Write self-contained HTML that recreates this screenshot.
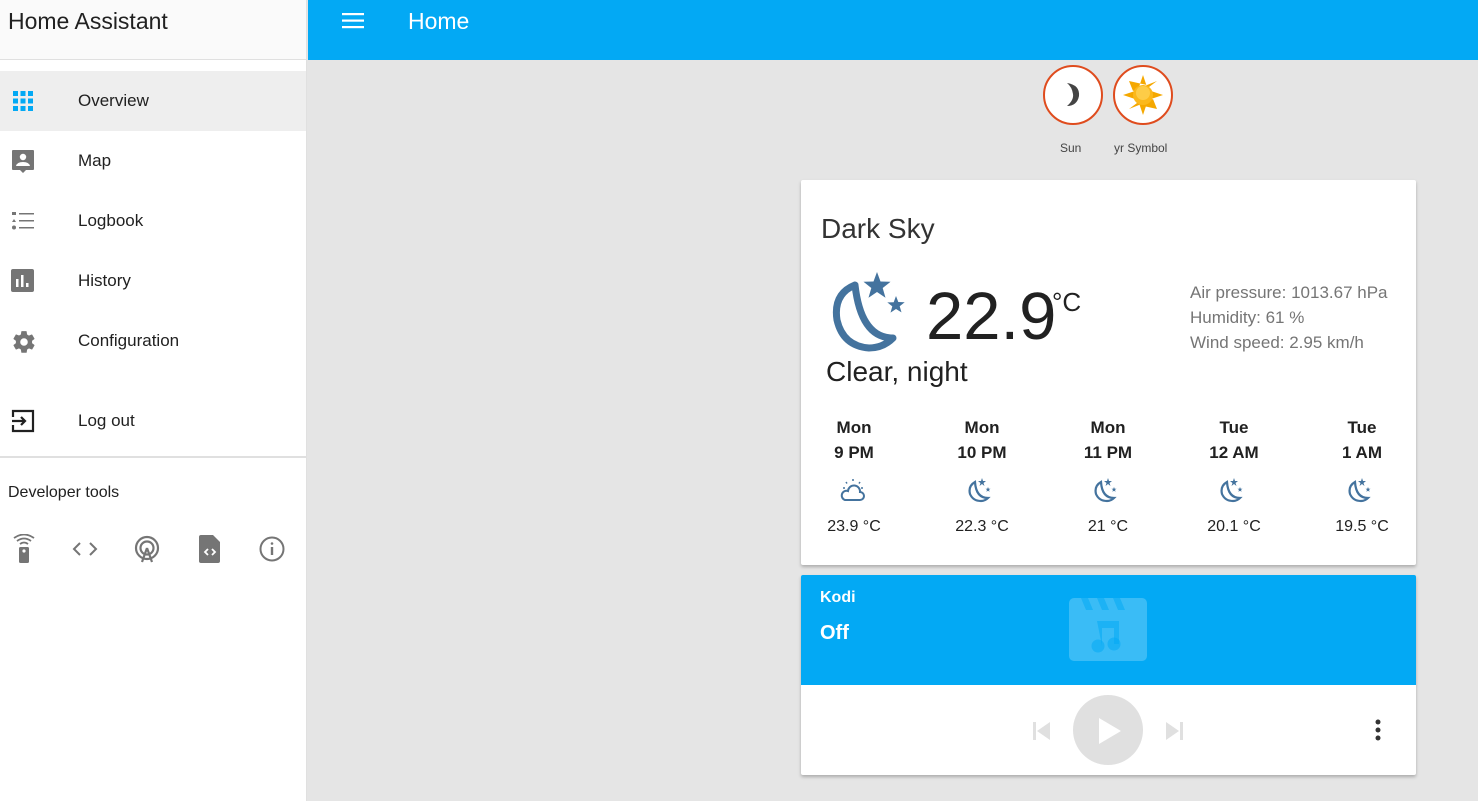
<!DOCTYPE html>
<html><head><meta charset="utf-8"><style>
*{box-sizing:border-box;margin:0;padding:0}
body{width:1478px;height:801px;overflow:hidden;font-family:"Liberation Sans",sans-serif;background:#e5e5e5;position:relative;color:#212121}
.side{position:absolute;left:0;top:0;width:307px;height:801px;background:#fff;border-right:1px solid #e0e0e0}
.sh{height:60px;background:#fafafa;border-bottom:1px solid #e0e0e0;font-size:23px;padding:8px 0 0 8px;color:#212121}
.item{position:absolute;left:0;width:306px;height:60px;font-size:17px;color:#212121}
.item span{position:absolute;left:78px;top:20px}
.item svg{position:absolute;left:11px;top:18px}
.top{position:absolute;left:308px;top:0;width:1170px;height:60px;background:#03a9f4;color:#fff}
.card{position:absolute;background:#fff;border-radius:2px;box-shadow:0 2px 3px rgba(0,0,0,.25)}
.abs{position:absolute}
.fc{position:absolute;width:100px;text-align:center;font-size:17px}
.fc b{display:block;line-height:25px}
</style></head><body>
<div class="side">
<div class="sh">Home Assistant</div>
<div class="item" style="top:71px;background:#eee"><svg width="24" height="24" viewBox="0 0 24 24" fill="#03a9f4"><rect x="2" y="2" width="5" height="5"/><rect x="9.5" y="2" width="5" height="5"/><rect x="17" y="2" width="5" height="5"/><rect x="2" y="9.5" width="5" height="5"/><rect x="9.5" y="9.5" width="5" height="5"/><rect x="17" y="9.5" width="5" height="5"/><rect x="2" y="17" width="5" height="5"/><rect x="9.5" y="17" width="5" height="5"/><rect x="17" y="17" width="5" height="5"/></svg><span>Overview</span></div>
<div class="item" style="top:131px"><svg width="24" height="26" viewBox="0 0 24 26" fill="#757575"><path d="M2 1h20q1 0 1 1v18q0 1-1 1h-7l-3 3-3-3H2q-1 0-1-1V2q0-1 1-1z"/><circle cx="12" cy="8" r="3.2" fill="#fff"/><path d="M5 17q1-4 7-4t7 4z" fill="#fff"/></svg><span>Map</span></div>
<div class="item" style="top:191px"><svg width="24" height="24" viewBox="0 0 24 24" fill="#757575"><rect x="1" y="3" width="4" height="3"/><path d="M3 10l2 3H1z"/><circle cx="3" cy="18.5" r="2"/><rect x="8" y="4" width="15" height="1.5"/><rect x="8" y="11" width="15" height="1.5"/><rect x="8" y="18" width="15" height="1.5"/></svg><span>Logbook</span></div>
<div class="item" style="top:251px"><svg width="24" height="24" viewBox="0 0 24 24" fill="#757575"><rect x="0" y="0" width="23" height="23" rx="2"/><rect x="5" y="10" width="2.5" height="8" fill="#fff"/><rect x="10" y="6" width="2.5" height="12" fill="#fff"/><rect x="15" y="14" width="2.5" height="4" fill="#fff"/></svg><span>History</span></div>
<div class="item" style="top:311px"><svg width="26" height="26" viewBox="0 0 24 24" fill="#757575"><path d="M12 15.5A3.5 3.5 0 1 1 12 8.5a3.5 3.5 0 0 1 0 7zm7.4-2.5c.04-.33.06-.66.06-1s-.02-.67-.06-1l2.1-1.6c.2-.15.25-.42.12-.64l-2-3.46c-.12-.22-.39-.3-.61-.22l-2.490 1c-.52-.4-1.08-.73-1.690-.98l-.38-2.650A.49.49 0 0 0 14 2h-4c-.25 0-.46.18-.49.42l-.38 2.65c-.61.25-1.17.59-1.69.98l-2.49-1c-.23-.09-.49 0-.61.22l-2 3.46c-.13.22-.07.49.12.64L4.57 11c-.04.33-.07.67-.07 1s.03.67.07 1l-2.11 1.6c-.19.15-.24.42-.12.64l2 3.46c.12.22.39.3.61.22l2.49-1c.52.4 1.08.73 1.69.98l.38 2.65c.03.24.24.42.49.42h4c.25 0 .46-.18.49-.42l.38-2.65c.61-.25 1.17-.58 1.69-.98l2.49 1c.23.09.49 0 .61-.22l2-3.46c.12-.22.07-.49-.12-.64L19.4 13z"/></svg><span>Configuration</span></div>
<div class="item" style="top:391px"><svg width="24" height="24" viewBox="0 0 24 24" fill="none" stroke="#212121" stroke-width="2.2"><path d="M2 8V2h20v20H2v-6"/><path d="M1 12h13M10 8l4 4-4 4"/></svg><span>Log out</span></div>
<div class="abs" style="top:456px;left:0;width:306px;border-top:2px solid #e0e0e0"></div>
<div class="abs" style="top:484px;left:8px;font-size:16px">Developer tools</div>
<svg class="abs" style="left:12px;top:534px" width="24" height="30" viewBox="0 0 24 30" fill="#757575"><rect x="7" y="13" width="10" height="16" rx="1.5"/><circle cx="12" cy="17" r="1.6" fill="#fff"/><path d="M8 10q4-3 8 0M5 7q7-5 14 0M2 4q10-7 20 0" stroke="#757575" stroke-width="1.8" fill="none"/></svg>
<svg class="abs" style="left:72px;top:537px" width="26" height="24" viewBox="0 0 26 24" fill="none" stroke="#757575" stroke-width="2"><path d="M8 6l-6 6 6 6M18 6l6 6-6 6"/></svg>
<svg class="abs" style="left:134px;top:535px" width="26" height="28" viewBox="0 0 26 28" fill="none" stroke="#757575" stroke-width="2.2"><circle cx="13" cy="13" r="11"/><circle cx="13" cy="13" r="6.5"/><path d="M13 13l-5 14M13 13l5 14"/></svg>
<svg class="abs" style="left:199px;top:535px" width="22" height="28" viewBox="0 0 22 28" fill="#757575"><path d="M2 0h12l7 7v19q0 2-2 2H2q-2 0-2-2V2q0-2 2-2z"/><path d="M9 14l-3 3 3 3M13 14l3 3-3 3" stroke="#fff" stroke-width="1.8" fill="none"/></svg>
<svg class="abs" style="left:259px;top:536px" width="26" height="26" viewBox="0 0 26 26" fill="none" stroke="#757575" stroke-width="2"><circle cx="13" cy="13" r="11.5"/><path d="M13 11v8" stroke-width="2.4"/><circle cx="13" cy="7.5" r="1.3" fill="#757575" stroke="none"/></svg>
</div>
<div class="top">
<svg class="abs" style="left:34px;top:12px" width="22" height="18" viewBox="0 0 22 18" fill="#fff"><rect y="1" width="22" height="2.2"/><rect y="7.5" width="22" height="2.2"/><rect y="14" width="22" height="2.2"/></svg>
<div class="abs" style="left:100px;top:8px;font-size:23px">Home</div>
</div>
<div class="abs" style="left:1043px;top:65px;width:60px;height:60px;border-radius:50%;border:2px solid #df4c1e;background:#fff"></div>
<svg class="abs" style="left:1062px;top:82px" width="22" height="26" viewBox="0 0 22 26"><path d="M5 1Q18 3 17 14 15 24 5 24 12 18 11 12 10 5 5 1z" fill="#444"/></svg>
<div class="abs" style="left:1113px;top:65px;width:60px;height:60px;border-radius:50%;border:2px solid #df4c1e;background:#fff"></div>
<svg class="abs" style="left:1121px;top:73px" width="44" height="44" viewBox="-22 -22 44 44"><g fill="#f5a800"><path d="M0-20L4-8-4-8zM0 20L4 8-4 8zM-20 0L-8 4-8-4zM20 0L8 4 8-4zM14-14L4-10-10 4zM-14 14L-4 10 10-4zM-14-14L-10 -4 4-10zM14 14L10 4-4 10z"/></g><circle r="10" fill="#fbb81c"/><circle r="7" cy="-2" fill="#fdd45a" opacity=".7"/></svg>
<div class="abs" style="left:1060px;top:141px;font-size:12px;color:#444">Sun</div>
<div class="abs" style="left:1114px;top:141px;font-size:12px;color:#444">yr Symbol</div>

<div class="card" style="left:801px;top:180px;width:615px;height:385px">
<div class="abs" style="left:20px;top:33px;font-size:28px;color:#333">Dark Sky</div>
<svg class="abs" style="left:30px;top:92px" width="80" height="82" viewBox="0 0 80 82"><path d="M24 13Q2 22 6 48q6 26 32 28 14 0 24-10Q30 66 24 13z" fill="none" stroke="#44739e" stroke-width="7" stroke-linejoin="round"/><path d="M46 0l3.5 9.5 10 .3-7.8 6.2 2.8 9.7L46 20l-8.5 5.7 2.8-9.7-7.8-6.2 10-.3z" fill="#44739e"/><path d="M65 24l2.3 6 6.4.2-5 4 1.8 6.2L65 37l-5.5 3.6 1.8-6.2-5-4 6.4-.2z" fill="#44739e"/></svg>
<div class="abs" style="left:125px;top:98px;font-size:67px;color:#212121">22.9</div>
<div class="abs" style="left:251px;top:107px;font-size:26px">°C</div>
<div class="abs" style="left:25px;top:176px;font-size:28px">Clear, night</div>
<div class="abs" style="left:389px;top:100px;font-size:17px;color:#757575;line-height:25px">Air pressure: 1013.67 hPa<br>Humidity: 61 %<br>Wind speed: 2.95 km/h</div>
<div class="fc" style="left:3px;top:235px"><b>Mon</b><b>9 PM</b></div>
<div class="fc" style="left:131px;top:235px"><b>Mon</b><b>10 PM</b></div>
<div class="fc" style="left:257px;top:235px"><b>Mon</b><b>11 PM</b></div>
<div class="fc" style="left:383px;top:235px"><b>Tue</b><b>12 AM</b></div>
<div class="fc" style="left:511px;top:235px"><b>Tue</b><b>1 AM</b></div>
<svg class="abs" style="left:39px;top:298px" width="26" height="26" viewBox="0 0 26 26" fill="none" stroke="#44739e" stroke-width="2"><path d="M5 22h15a4 4 0 0 0 0-8 6 6 0 0 0-12-1 4.5 4.5 0 0 0-3 9z"/><path d="M13 1v2M6 4l1 1.5M20 4l-1 1.5M3 10h2M21 10h2" stroke-width="1.5"/></svg>
<svg class="abs" style="left:166px;top:297px" width="26" height="26" viewBox="0 0 26 26"><path d="M8 5Q1 9 3 17q3 7 11 7 4 0 7-3Q9 21 8 5z" fill="none" stroke="#44739e" stroke-width="2.2"/><path d="M15 1l1 3h3l-2.5 2 1 3-2.5-2-2.5 2 1-3-2.5-2h3z M21 10l.7 1.8h1.8l-1.5 1.1.6 1.9-1.6-1.1-1.6 1.1.6-1.9-1.5-1.1h1.8z" fill="#44739e"/></svg>
<svg class="abs" style="left:292px;top:297px" width="26" height="26" viewBox="0 0 26 26"><path d="M8 5Q1 9 3 17q3 7 11 7 4 0 7-3Q9 21 8 5z" fill="none" stroke="#44739e" stroke-width="2.2"/><path d="M15 1l1 3h3l-2.5 2 1 3-2.5-2-2.5 2 1-3-2.5-2h3z M21 10l.7 1.8h1.8l-1.5 1.1.6 1.9-1.6-1.1-1.6 1.1.6-1.9-1.5-1.1h1.8z" fill="#44739e"/></svg>
<svg class="abs" style="left:418px;top:297px" width="26" height="26" viewBox="0 0 26 26"><path d="M8 5Q1 9 3 17q3 7 11 7 4 0 7-3Q9 21 8 5z" fill="none" stroke="#44739e" stroke-width="2.2"/><path d="M15 1l1 3h3l-2.5 2 1 3-2.5-2-2.5 2 1-3-2.5-2h3z M21 10l.7 1.8h1.8l-1.5 1.1.6 1.9-1.6-1.1-1.6 1.1.6-1.9-1.5-1.1h1.8z" fill="#44739e"/></svg>
<svg class="abs" style="left:546px;top:297px" width="26" height="26" viewBox="0 0 26 26"><path d="M8 5Q1 9 3 17q3 7 11 7 4 0 7-3Q9 21 8 5z" fill="none" stroke="#44739e" stroke-width="2.2"/><path d="M15 1l1 3h3l-2.5 2 1 3-2.5-2-2.5 2 1-3-2.5-2h3z M21 10l.7 1.8h1.8l-1.5 1.1.6 1.9-1.6-1.1-1.6 1.1.6-1.9-1.5-1.1h1.8z" fill="#44739e"/></svg>
<div class="fc" style="left:3px;top:338px;font-size:16px">23.9 °C</div>
<div class="fc" style="left:131px;top:338px;font-size:16px">22.3 °C</div>
<div class="fc" style="left:257px;top:338px;font-size:16px">21 °C</div>
<div class="fc" style="left:383px;top:338px;font-size:16px">20.1 °C</div>
<div class="fc" style="left:511px;top:338px;font-size:16px">19.5 °C</div>
</div>

<div class="card" style="left:801px;top:575px;width:615px;height:200px;overflow:hidden">
<div class="abs" style="left:0;top:0;width:615px;height:110px;background:#03a9f4"></div>
<div class="abs" style="left:19px;top:14px;font-size:16px;font-weight:bold;color:#fff">Kodi</div>
<div class="abs" style="left:19px;top:47px;font-size:20px;font-weight:bold;color:#fff">Off</div>
<svg class="abs" style="left:268px;top:23px" width="78" height="63" viewBox="0 0 78 63"><rect width="78" height="63" rx="5" fill="#fff" opacity=".22"/><path d="M12 0h7l5 12h-7zM28 0h7l5 12h-7zM44 0h7l5 12h-7z" fill="#03a9f4" opacity=".55"/><path d="M28 23h22v23h-5V30H33v18z" fill="#03a9f4" opacity=".55"/><circle cx="29" cy="48" r="6.5" fill="#03a9f4" opacity=".55"/><circle cx="45" cy="46" r="6.5" fill="#03a9f4" opacity=".55"/></svg>
<div class="abs" style="left:272px;top:120px;width:70px;height:70px;border-radius:50%;background:#e0e0e0"></div>
<svg class="abs" style="left:296px;top:142px" width="26" height="28" viewBox="0 0 26 28"><path d="M2 1l22 13L2 27z" fill="#fff"/></svg>
<svg class="abs" style="left:230px;top:146px" width="22" height="20" viewBox="0 0 22 20" fill="#e0e0e0"><rect x="2" y="1" width="3" height="18"/><path d="M19 1v18L6 10z"/></svg>
<svg class="abs" style="left:362px;top:146px" width="22" height="20" viewBox="0 0 22 20" fill="#e0e0e0"><rect x="17" y="1" width="3" height="18"/><path d="M3 1v18l13-9z"/></svg>
<svg class="abs" style="left:570px;top:143px" width="14" height="26" viewBox="0 0 14 26" fill="#333"><circle cx="7" cy="4" r="2.5"/><circle cx="7" cy="12" r="2.5"/><circle cx="7" cy="20" r="2.5"/></svg>
</div>
</body></html>
